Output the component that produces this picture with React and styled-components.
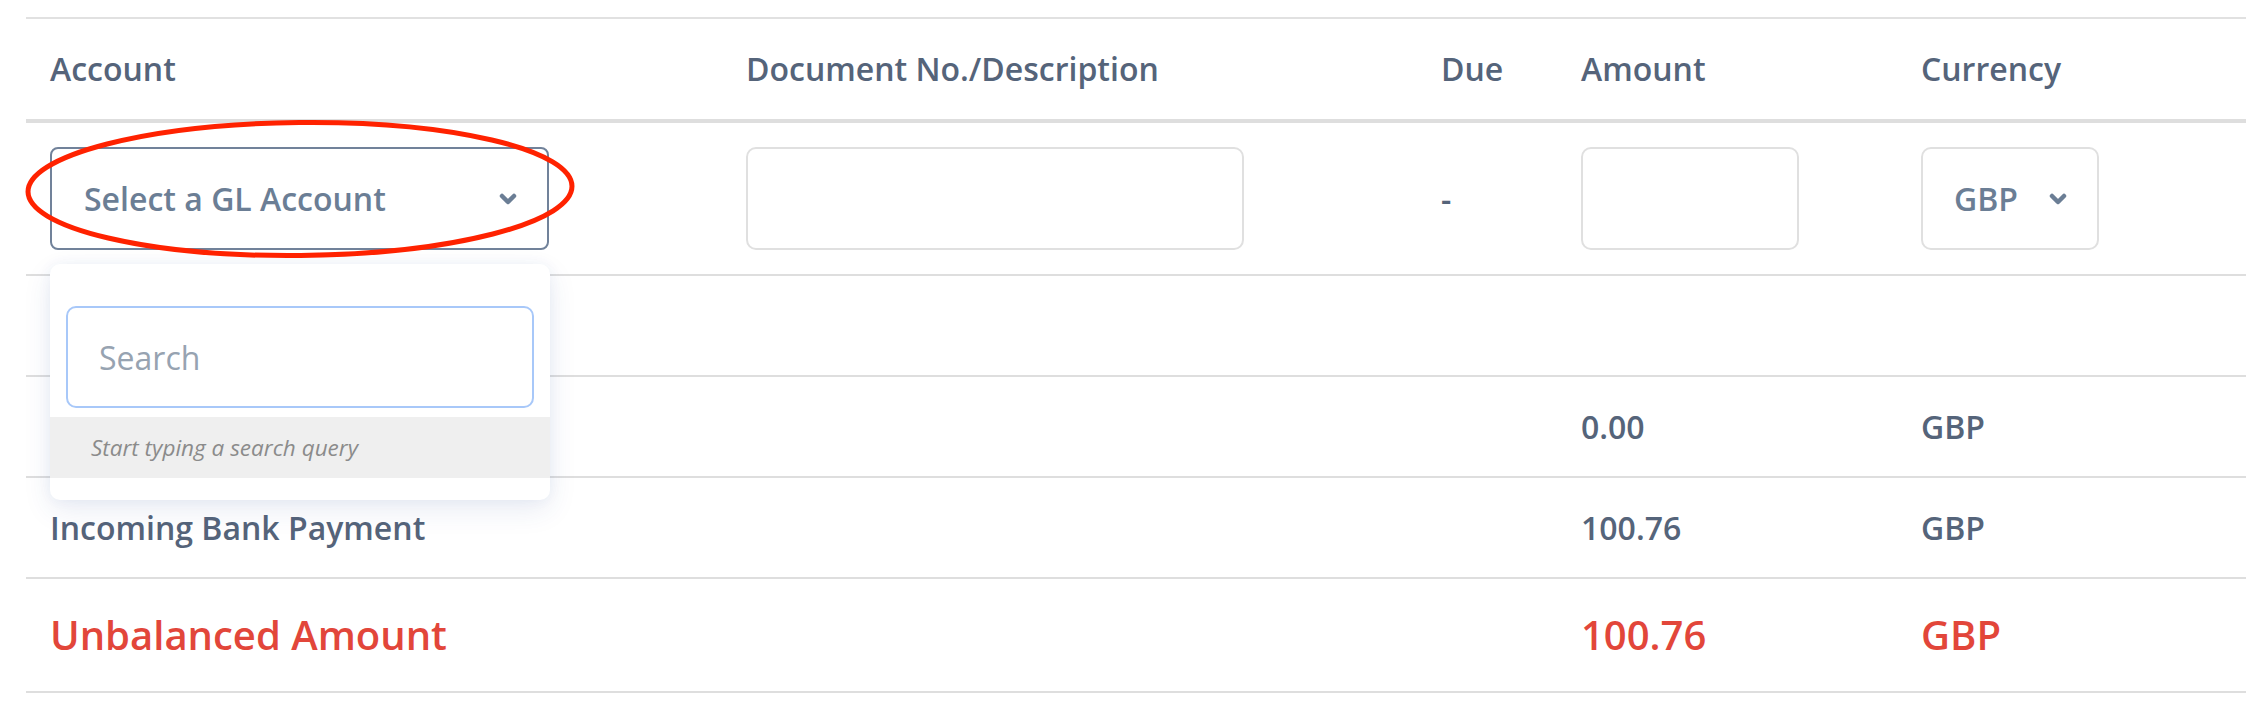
import React from "react";
import styled, { createGlobalStyle } from "styled-components";

const Global = createGlobalStyle`
  * { box-sizing: border-box; }
  html, body { margin: 0; padding: 0; background: #ffffff; }
  body { font-family: "Open Sans", "Liberation Sans", sans-serif; }
`;

const COLS = "696px 695px 140px 340px 349px";

const Page = styled.div`
  padding: 17px 0 0 26px;
`;

const Table = styled.div`
  width: 2220px;
  border-top: 2px solid #e1e1e1;
`;

const Row = styled.div`
  display: grid;
  grid-template-columns: ${COLS};
  align-items: center;
  height: ${(p) => p.$h}px;
  border-bottom: ${(p) => (p.$thick ? 4 : 2)}px solid #dedede;
`;

const Cell = styled.div`
  padding-left: 24px;
  font-size: ${(p) => (p.$big ? 40 : 32)}px;
  font-weight: 600;
  color: ${(p) => (p.$red ? "#e2463a" : "#55647a")};
  white-space: nowrap;
  line-height: 1.3;
`;

const SelectWrap = styled.div`
  position: relative;
  width: ${(p) => p.$w}px;
`;

const SelectBox = styled.div`
  display: flex;
  align-items: center;
  justify-content: space-between;
  height: 103px;
  padding: 0 30px 0 ${(p) => p.$pl}px;
  border: 2px solid ${(p) => (p.$active ? "#71829a" : "#e0e0e0")};
  border-radius: ${(p) => (p.$active ? 8 : 10)}px;
  font-size: 32px;
  font-weight: 600;
  color: #6b7e95;
  background: #fff;
`;

const Field = styled.div`
  width: ${(p) => p.$w}px;
  height: 103px;
  border: 2px solid #e0e0e0;
  border-radius: 10px;
  background: #fff;
`;

const Dash = styled.span`
  font-size: 32px;
  font-weight: 600;
  color: #55647a;
`;

const Panel = styled.div`
  position: absolute;
  top: calc(100% + 14px);
  left: 0;
  width: 500px;
  padding-top: 42px;
  padding-bottom: 22px;
  background: #fff;
  border-radius: 10px;
  box-shadow: 0 10px 28px rgba(40, 70, 150, 0.1), 0 0 14px rgba(40, 70, 150, 0.05);
  z-index: 5;
`;

const SearchInput = styled.input`
  display: block;
  margin: 0 16px 9px 16px;
  width: 468px;
  height: 102px;
  padding: 0 0 0 31px;
  border: 2px solid #a8c8f9;
  border-radius: 10px;
  font-family: "Open Sans", "Liberation Sans", sans-serif;
  font-size: 32px;
  color: #55647a;
  outline: none;
  background: #fff;
  &::placeholder {
    color: #97a3b1;
    opacity: 1;
  }
`;

const Hint = styled.div`
  height: 61px;
  display: flex;
  align-items: center;
  padding-left: 41px;
  background: #efefef;
  font-size: 22.5px;
  font-weight: 400;
  font-style: italic;
  color: #8b8b8b;
`;

const Ring = styled.svg`
  position: absolute;
  left: -25px;
  top: -27px;
  width: 550px;
  height: 137px;
  overflow: visible;
  pointer-events: none;
  z-index: 6;
`;

const Chevron = () => (
  <svg width="18" height="12" viewBox="0 0 18 12">
    <polyline
      points="3,3 9,9 15,3"
      fill="none"
      stroke="#6b7e95"
      strokeWidth="4.5"
      strokeLinecap="round"
      strokeLinejoin="round"
    />
  </svg>
);

export default function App() {
  return (
    <>
      <Global />
      <Page>
        <Table>
          <Row $h={104} $thick>
            <Cell>Account</Cell>
            <Cell>Document No./Description</Cell>
            <Cell>Due</Cell>
            <Cell>Amount</Cell>
            <Cell>Currency</Cell>
          </Row>
          <Row $h={153}>
            <Cell>
              <SelectWrap $w={499}>
                <SelectBox $active $pl={32}>
                  <span>Select a GL Account</span>
                  <Chevron />
                </SelectBox>
                <Ring viewBox="0 0 550 137">
                  <ellipse
                    cx="275"
                    cy="69"
                    rx="272"
                    ry="66.5"
                    fill="none"
                    stroke="#ff2200"
                    strokeWidth="5"
                    transform="rotate(-0.6 275 69)"
                  />
                </Ring>
                <Panel>
                  <SearchInput placeholder="Search" readOnly />
                  <Hint>Start typing a search query</Hint>
                </Panel>
              </SelectWrap>
            </Cell>
            <Cell>
              <Field $w={498} />
            </Cell>
            <Cell>
              <Dash>-</Dash>
            </Cell>
            <Cell>
              <Field $w={218} />
            </Cell>
            <Cell>
              <SelectWrap $w={178}>
                <SelectBox $pl={31}>
                  <span>GBP</span>
                  <Chevron />
                </SelectBox>
              </SelectWrap>
            </Cell>
          </Row>
          <Row $h={101}>
            <Cell />
            <Cell />
            <Cell />
            <Cell />
            <Cell />
          </Row>
          <Row $h={101}>
            <Cell />
            <Cell />
            <Cell />
            <Cell>0.00</Cell>
            <Cell>GBP</Cell>
          </Row>
          <Row $h={101}>
            <Cell>Incoming Bank Payment</Cell>
            <Cell />
            <Cell />
            <Cell>100.76</Cell>
            <Cell>GBP</Cell>
          </Row>
          <Row $h={114}>
            <Cell $red $big>Unbalanced Amount</Cell>
            <Cell />
            <Cell />
            <Cell $red $big>100.76</Cell>
            <Cell $red $big>GBP</Cell>
          </Row>
        </Table>
      </Page>
    </>
  );
}
